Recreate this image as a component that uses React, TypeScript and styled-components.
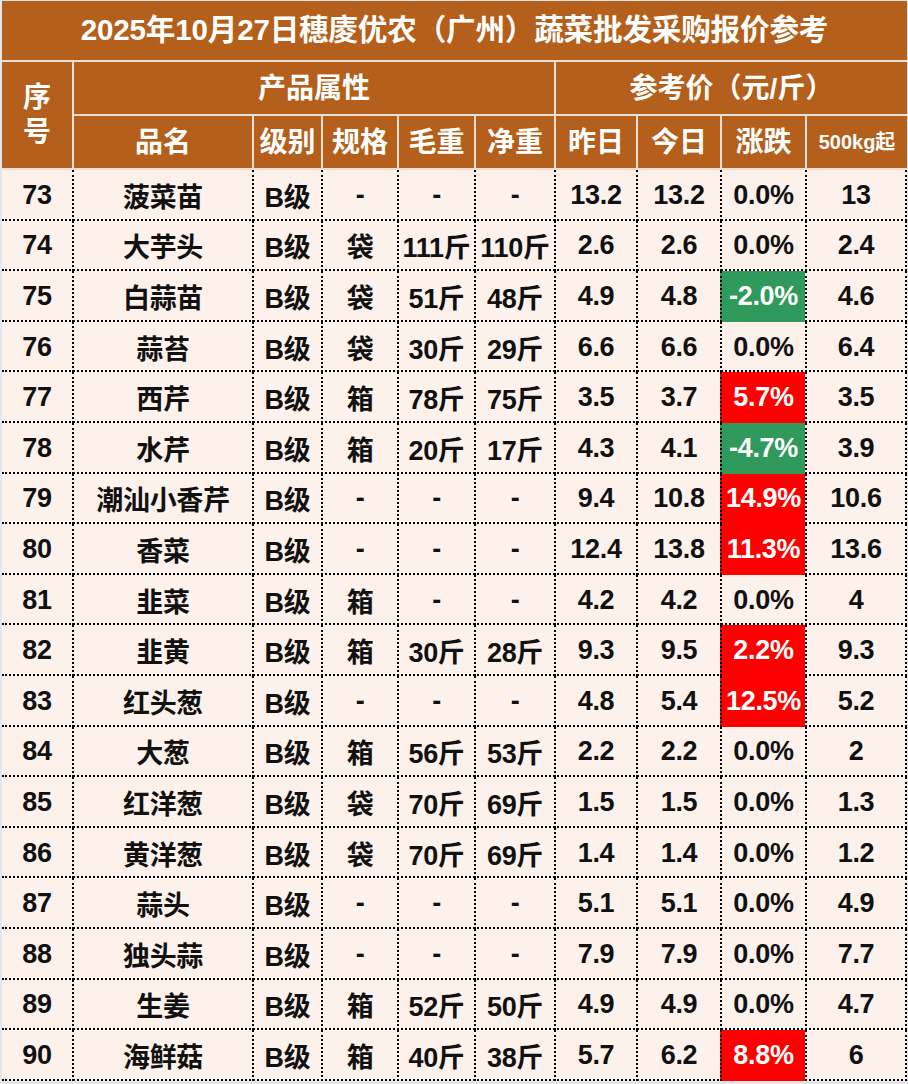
import React from "react";
import styled, { createGlobalStyle } from "styled-components";

const Global = createGlobalStyle`
  html, body { margin: 0; padding: 0; background: #e4e7ea; }
  body { font-family: "Liberation Sans", "Noto Sans CJK SC", sans-serif; }
`;

const Page = styled.div`
  width: 908px;
  height: 1084px;
  padding: 1px 0 0 2px;
  box-sizing: border-box;
  overflow: hidden;
`;

const Header = styled.div`
  display: grid;
  grid-template-columns: 70px 178px 67px 74px 75px 78px 80px 82px 83px 100px;
  grid-template-rows: 59px 52px 52px;
  gap: 2px;
  background: #ecdfd3;
  width: 905px;
  padding-bottom: 2px;
`;

const HCell = styled.div<{ $col?: string; $row?: string; $size?: number }>`
  background: #b45f1b;
  color: #fff;
  font-weight: 700;
  font-size: ${(p) => p.$size ?? 28}px;
  display: flex;
  align-items: center;
  justify-content: center;
  text-align: center;
  grid-column: ${(p) => p.$col ?? "auto"};
  grid-row: ${(p) => p.$row ?? "auto"};
  line-height: 1.25;
  white-space: nowrap;
`;

const Title = styled(HCell)`
  font-size: 29.6px;
  letter-spacing: -0.2px;
`;

const Body = styled.div`
  display: flex;
  flex-direction: column;
  background: #fdf1eb;
  width: 905px;
`;

const Row = styled.div`
  display: grid;
  grid-template-columns: 70px 180px 69px 76px 77px 80px 82px 84px 85px 102px;
  height: 50.6px;
  box-sizing: border-box;
  border-bottom: 2px dotted #000;
`;

const Cell = styled.div<{ $tone?: "up" | "down" }>`
  display: flex;
  align-items: center;
  justify-content: center;
  font-weight: 700;
  font-size: 27px;
  color: ${(p) => (p.$tone ? "#fff" : "#111")};
  background: ${(p) =>
    p.$tone === "up" ? "#ff0000" : p.$tone === "down" ? "#2f9a5c" : "transparent"};
  white-space: nowrap;
  box-sizing: border-box;
  margin-bottom: -2px;
  letter-spacing: -0.3px;
  & + & { border-left: 2px dotted #000; }
  &:last-child { border-right: 2px dotted #000; }
`;

type Item = [number, string, string, string, string, string, string, string, string];

const data: Item[] = [
  [73, "菠菜苗", "-", "-", "-", "13.2", "13.2", "0.0%", "13"],
  [74, "大芋头", "袋", "111斤", "110斤", "2.6", "2.6", "0.0%", "2.4"],
  [75, "白蒜苗", "袋", "51斤", "48斤", "4.9", "4.8", "-2.0%", "4.6"],
  [76, "蒜苔", "袋", "30斤", "29斤", "6.6", "6.6", "0.0%", "6.4"],
  [77, "西芹", "箱", "78斤", "75斤", "3.5", "3.7", "5.7%", "3.5"],
  [78, "水芹", "箱", "20斤", "17斤", "4.3", "4.1", "-4.7%", "3.9"],
  [79, "潮汕小香芹", "-", "-", "-", "9.4", "10.8", "14.9%", "10.6"],
  [80, "香菜", "-", "-", "-", "12.4", "13.8", "11.3%", "13.6"],
  [81, "韭菜", "箱", "-", "-", "4.2", "4.2", "0.0%", "4"],
  [82, "韭黄", "箱", "30斤", "28斤", "9.3", "9.5", "2.2%", "9.3"],
  [83, "红头葱", "-", "-", "-", "4.8", "5.4", "12.5%", "5.2"],
  [84, "大葱", "箱", "56斤", "53斤", "2.2", "2.2", "0.0%", "2"],
  [85, "红洋葱", "袋", "70斤", "69斤", "1.5", "1.5", "0.0%", "1.3"],
  [86, "黄洋葱", "袋", "70斤", "69斤", "1.4", "1.4", "0.0%", "1.2"],
  [87, "蒜头", "-", "-", "-", "5.1", "5.1", "0.0%", "4.9"],
  [88, "独头蒜", "-", "-", "-", "7.9", "7.9", "0.0%", "7.7"],
  [89, "生姜", "箱", "52斤", "50斤", "4.9", "4.9", "0.0%", "4.7"],
  [90, "海鲜菇", "箱", "40斤", "38斤", "5.7", "6.2", "8.8%", "6"],
];

function tone(ch: string): "up" | "down" | undefined {
  if (ch === "0.0%") return undefined;
  return ch.startsWith("-") ? "down" : "up";
}

export default function App() {
  return (
    <Page>
      <Global />
      <Header>
        <Title $col="1 / -1">2025年10月27日穗庱优农（广州）蔬菜批发采购报价参考</Title>
        <HCell $row="2 / 4">
          序<br />号
        </HCell>
        <HCell $col="2 / 7">产品属性</HCell>
        <HCell $col="7 / 11">参考价（元/斤）</HCell>
        <HCell>品名</HCell>
        <HCell>级别</HCell>
        <HCell>规格</HCell>
        <HCell>毛重</HCell>
        <HCell>净重</HCell>
        <HCell>昨日</HCell>
        <HCell>今日</HCell>
        <HCell>涨跌</HCell>
        <HCell $size={20}>500kg起</HCell>
      </Header>
      <Body>
        {data.map(([n, name, spec, gross, net, y, t, ch, bulk]) => (
          <Row key={n}>
            <Cell>{n}</Cell>
            <Cell>{name}</Cell>
            <Cell>B级</Cell>
            <Cell>{spec}</Cell>
            <Cell>{gross}</Cell>
            <Cell>{net}</Cell>
            <Cell>{y}</Cell>
            <Cell>{t}</Cell>
            <Cell $tone={tone(ch)}>{ch}</Cell>
            <Cell>{bulk}</Cell>
          </Row>
        ))}
      </Body>
    </Page>
  );
}
